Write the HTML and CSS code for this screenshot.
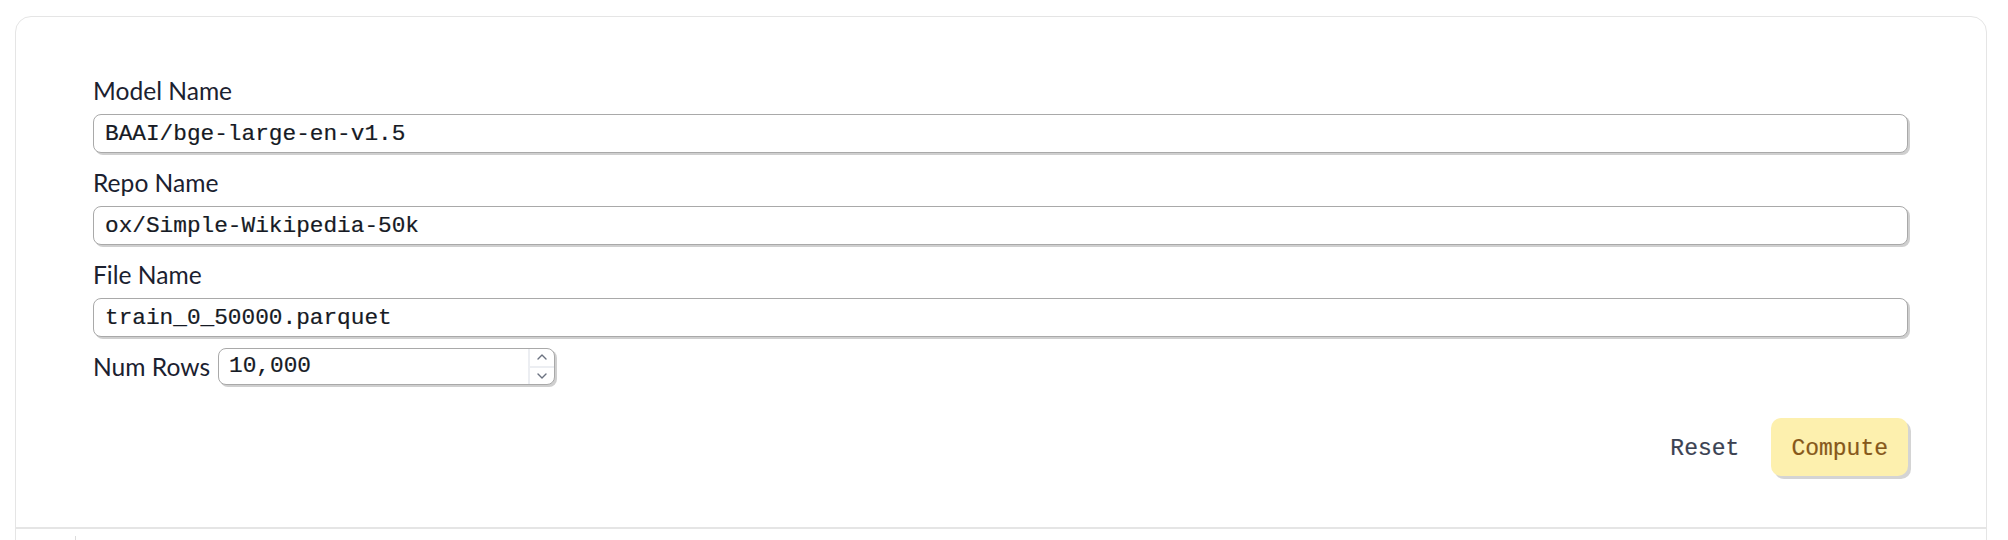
FILE: index.html
```html
<!DOCTYPE html>
<html lang="en">
<head>
<meta charset="utf-8">
<title>Embedding compute</title>
<link rel="stylesheet" href="styles.css">
</head>
<body>
<div class="page">
  <div class="card">
    <form class="form">
      <div class="field">
        <label class="label" for="model">Model Name</label>
        <input class="text-input" id="model" type="text" value="BAAI/bge-large-en-v1.5">
      </div>
      <div class="field">
        <label class="label" for="repo">Repo Name</label>
        <input class="text-input" id="repo" type="text" value="ox/Simple-Wikipedia-50k">
      </div>
      <div class="field">
        <label class="label" for="file">File Name</label>
        <input class="text-input" id="file" type="text" value="train_0_50000.parquet">
      </div>
      <div class="num-row">
        <label class="label inline" for="rows">Num Rows</label>
        <div class="num-box">
          <input class="num-input" id="rows" type="text" value="10,000">
          <div class="spinner">
            <span class="spin up"><svg width="12" height="8" viewBox="0 0 12 8"><path d="M2 6 L6 2 L10 6" fill="none" stroke="#6b7280" stroke-width="1.4" stroke-linecap="round" stroke-linejoin="round"/></svg></span>
            <span class="spin down"><svg width="12" height="8" viewBox="0 0 12 8"><path d="M2 2 L6 6 L10 2" fill="none" stroke="#6b7280" stroke-width="1.4" stroke-linecap="round" stroke-linejoin="round"/></svg></span>
          </div>
        </div>
      </div>
      <div class="actions">
        <button class="btn btn-reset" type="button">Reset</button>
        <button class="btn btn-compute" type="button">Compute</button>
      </div>
    </form>
    <div class="lower">
      <div class="lower-tick"></div>
    </div>
  </div>
</div>
</body>
</html>
```

FILE: styles.css
```css
* { box-sizing: border-box; }

html, body {
  margin: 0;
  background: #ffffff;
  height: 540px;
  overflow: hidden;
}

.page {
  padding: 16px 21px 0 15px;
}

.card {
  border: 1px solid #e5e5e5;
  border-radius: 16px;
  background: #ffffff;
  height: 600px;
}

.form {
  padding: 59px 78px 51px 77px;
  display: flex;
  flex-direction: column;
  border-bottom: 2px solid #e5e5e5;
}

.field {
  display: flex;
  flex-direction: column;
  margin-bottom: 15px;
}

.label {
  font-family: "Lato", "Noto Sans", sans-serif;
  font-size: 24.6px;
  line-height: 30px;
  color: #1b2130;
  margin-bottom: 8px;
}

.label.inline {
  margin: 0 8px 0 0;
}

.text-input {
  height: 39px;
  width: 100%;
  border: 1px solid #a9a9a9;
  border-radius: 8px;
  box-shadow: 2px 2px 0 #cfcfcf;
  padding: 0 11px;
  font-family: "Liberation Mono", "DejaVu Sans Mono", monospace;
  font-size: 22.75px;
  line-height: 37px;
  color: #161a24;
  -webkit-text-stroke: 0.2px #161a24;
  background: #ffffff;
  outline: none;
}

.num-row {
  display: flex;
  align-items: center;
  margin-top: -4px;
}

.num-box {
  display: flex;
  width: 337px;
  height: 37px;
  border: 1px solid #a9a9a9;
  border-radius: 8px;
  box-shadow: 2px 2px 0 #cfcfcf;
  overflow: hidden;
  background: #ffffff;
}

.num-input {
  flex: 1;
  min-width: 0;
  border: 0;
  outline: none;
  padding: 0 10px;
  font-family: "Liberation Mono", "DejaVu Sans Mono", monospace;
  font-size: 22.75px;
  line-height: 35px;
  color: #161a24;
  -webkit-text-stroke: 0.2px #161a24;
  background: transparent;
}

.spinner {
  width: 26px;
  display: flex;
  flex-direction: column;
  border-left: 2px solid #eceef2;
}

.spin {
  flex: 1;
  display: flex;
  align-items: center;
  justify-content: center;
}

.spin.up {
  border-bottom: 2px solid #eceef2;
}

.actions {
  display: flex;
  justify-content: flex-end;
  gap: 12px;
  margin-top: 33px;
}

.btn {
  height: 58px;
  padding: 3px 20px 0;
  border: 0;
  border-radius: 10px;
  font-family: "Liberation Mono", "DejaVu Sans Mono", monospace;
  font-size: 23px;
  cursor: pointer;
}

.btn-reset {
  background: transparent;
  color: #3b4252;
  -webkit-text-stroke: 0.2px #3b4252;
}

.btn-compute {
  background: #fdf0ae;
  color: #86581a;
  -webkit-text-stroke: 0.2px #86581a;
  box-shadow: 3px 3px 0 #d4d4d4;
}

.lower {
  padding: 7px 0 0 59px;
}

.lower-tick {
  width: 1px;
  height: 20px;
  background: #dcdcdc;
}
```
